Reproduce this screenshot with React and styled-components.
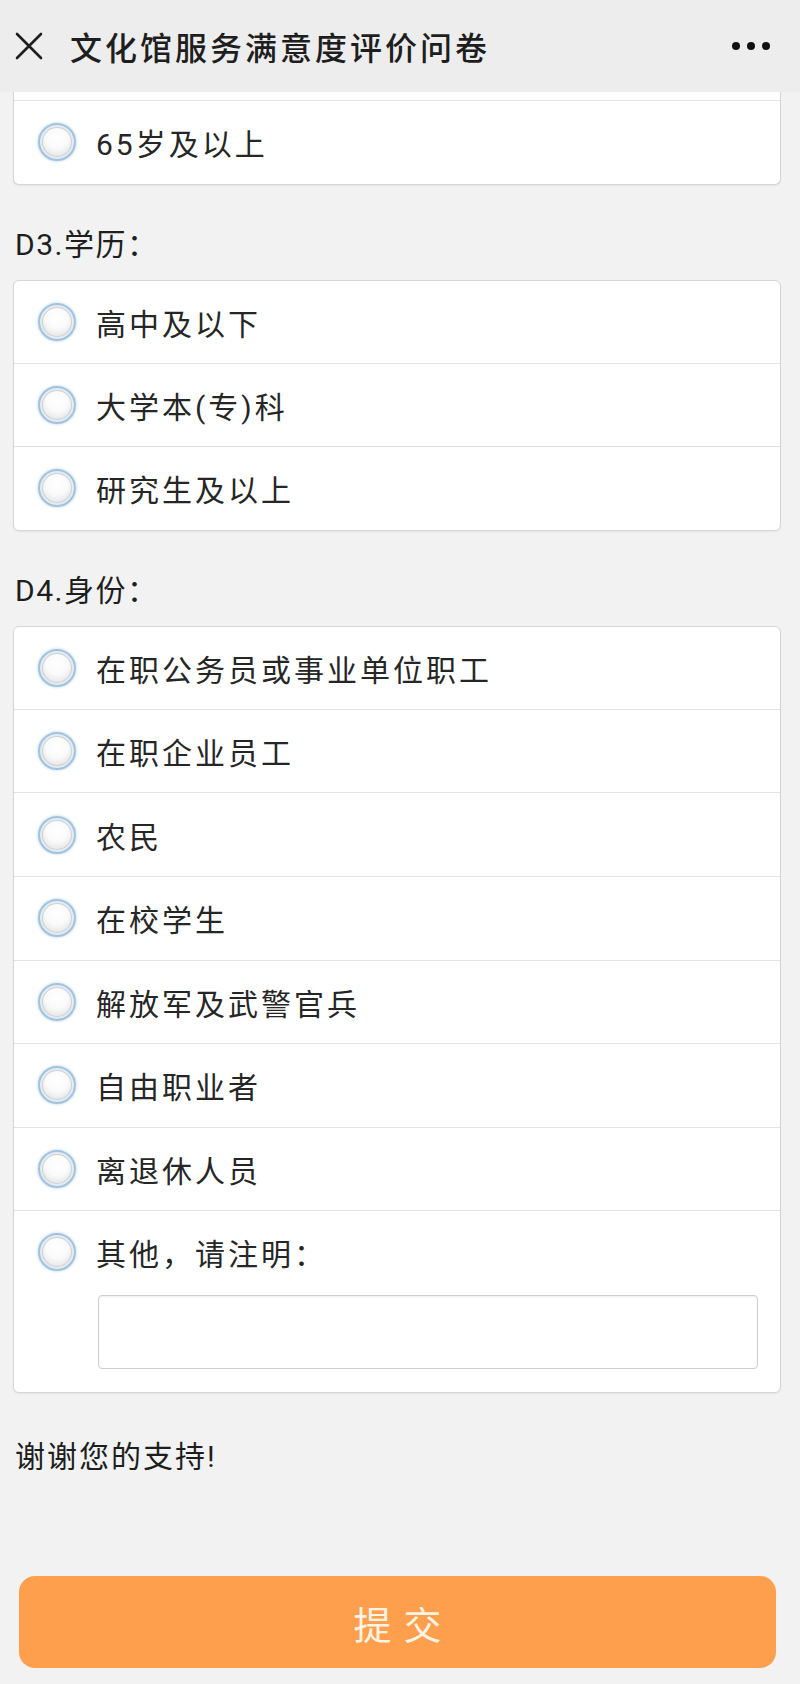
import React from 'react';
import styled, { createGlobalStyle } from 'styled-components';

const GlobalStyle = createGlobalStyle`
  html, body {
    margin: 0;
    padding: 0;
    background: #f2f2f2;
  }
  * {
    box-sizing: border-box;
  }
`;

const Page = styled.div`
  width: 800px;
  min-height: 1684px;
  background: #f2f2f2;
  font-family: Roboto, "Noto Sans CJK SC", "DejaVu Sans", sans-serif;
  color: #262626;
`;

const TopBar = styled.div`
  height: 92px;
  background: #ededed;
  display: flex;
  align-items: center;
  padding: 0 30px 0 15px;
`;

const CloseButton = styled.div`
  width: 28px;
  height: 28px;
  display: flex;
  align-items: center;
  justify-content: center;
`;

const TopTitle = styled.div`
  flex: 1;
  margin-left: 27px;
  font-size: 32px;
  font-weight: 500;
  letter-spacing: 3px;
  color: #1e1e1e;
`;

const MoreDots = styled.div`
  display: flex;
  gap: 7px;
`;

const Dot = styled.span`
  width: 8px;
  height: 8px;
  border-radius: 50%;
  background: #111;
`;

const Content = styled.div`
  padding: 0 19px 0 13px;
`;

const Card = styled.div`
  background: #fff;
  border: 1px solid #d6d6d6;
  border-radius: ${(p) => (p.$cut ? '0 0 6px 6px' : '6px')};
  border-top: ${(p) => (p.$cut ? 'none' : '1px solid #d6d6d6')};
  box-shadow: 0 1px 2px rgba(0, 0, 0, 0.06);
`;

const CutStub = styled.div`
  height: 8px;
`;

const Option = styled.div`
  display: flex;
  flex-direction: column;
  border-top: ${(p) => (p.$first ? 'none' : '1px solid #e3e3e3')};
  min-height: ${(p) => (p.$first ? '82px' : '83.6px')};
  padding: 0 0 0 24px;
  justify-content: ${(p) => (p.$withInput ? 'flex-start' : 'center')};
`;

const OptionLine = styled.div`
  display: flex;
  align-items: center;
  height: ${(p) => (p.$fixed ? '82px' : 'auto')};
`;

const Radio = styled.span`
  width: 38px;
  height: 38px;
  border-radius: 50%;
  flex-shrink: 0;
  border: 2px solid #a3c3dd;
  box-shadow: 0 0 3px rgba(140, 185, 225, 0.7), inset 0 0 0 2px #e1ecf6,
    inset 0 0 0 3px #d0d0d0;
  background: radial-gradient(circle at 50% 38%, #ffffff 0%, #fafafa 40%, #e6e6e6 70%, #dcdcdc 78%);
`;

const OptionText = styled.span`
  margin-left: 20px;
  font-size: 30px;
  letter-spacing: 3px;
  color: #262626;
`;

const OtherInput = styled.input`
  display: block;
  margin: 2px 22px 23px 60px;
  height: 74px;
  border: 1px solid #cfcfcf;
  border-radius: 4px;
  background: #fff;
  box-shadow: inset 0 1px 2px rgba(0, 0, 0, 0.08);
  outline: none;
  font-size: 28px;
  padding: 0 12px;
`;

const Question = styled.div`
  padding: 39px 0 14px 2px;
  font-size: 30px;
  line-height: 42px;
  letter-spacing: 1.5px;
  color: #1e1e1e;
`;

const Thanks = styled.div`
  padding: 43px 0 0 2px;
  font-size: 30px;
  line-height: 42px;
  letter-spacing: 2px;
  color: #1e1e1e;
`;

const SubmitButton = styled.button`
  display: block;
  width: 757px;
  height: 92px;
  margin: 98px 0 0 19px;
  border: none;
  border-radius: 16px;
  background: #fd9f4d;
  color: #fff4e4;
  font-family: Roboto, "Noto Sans CJK SC", sans-serif;
  font-size: 38px;
  letter-spacing: 12px;
  text-indent: 12px;
`;

const OptionRow = ({ text, first }) => (
  <Option $first={first}>
    <OptionLine>
      <Radio />
      <OptionText>{text}</OptionText>
    </OptionLine>
  </Option>
);

const App = () => {
  const education = ['高中及以下', '大学本(专)科', '研究生及以上'];
  const identity = [
    '在职公务员或事业单位职工',
    '在职企业员工',
    '农民',
    '在校学生',
    '解放军及武警官兵',
    '自由职业者',
    '离退休人员',
  ];

  return (
    <Page>
      <GlobalStyle />
      <TopBar>
        <CloseButton>
          <svg width="28" height="28" viewBox="0 0 28 28">
            <path d="M2 2 L26 26 M26 2 L2 26" stroke="#1e1e1e" strokeWidth="2.6" strokeLinecap="round" />
          </svg>
        </CloseButton>
        <TopTitle>文化馆服务满意度评价问卷</TopTitle>
        <MoreDots>
          <Dot />
          <Dot />
          <Dot />
        </MoreDots>
      </TopBar>

      <Content>
        {/* previous question scrolled under the top bar */}
        <Card $cut>
          <CutStub />
          <OptionRow text="65岁及以上" />
        </Card>

        <Question>D3.学历：</Question>
        <Card>
          {education.map((opt, i) => (
            <OptionRow key={opt} text={opt} first={i === 0} />
          ))}
        </Card>

        <Question>D4.身份：</Question>
        <Card>
          {identity.map((opt, i) => (
            <OptionRow key={opt} text={opt} first={i === 0} />
          ))}
          <Option $withInput>
            <OptionLine $fixed>
              <Radio />
              <OptionText>其他，请注明：</OptionText>
            </OptionLine>
            <OtherInput type="text" />
          </Option>
        </Card>

        <Thanks>谢谢您的支持!</Thanks>
      </Content>

      <SubmitButton>提交</SubmitButton>
    </Page>
  );
};

export default App;
